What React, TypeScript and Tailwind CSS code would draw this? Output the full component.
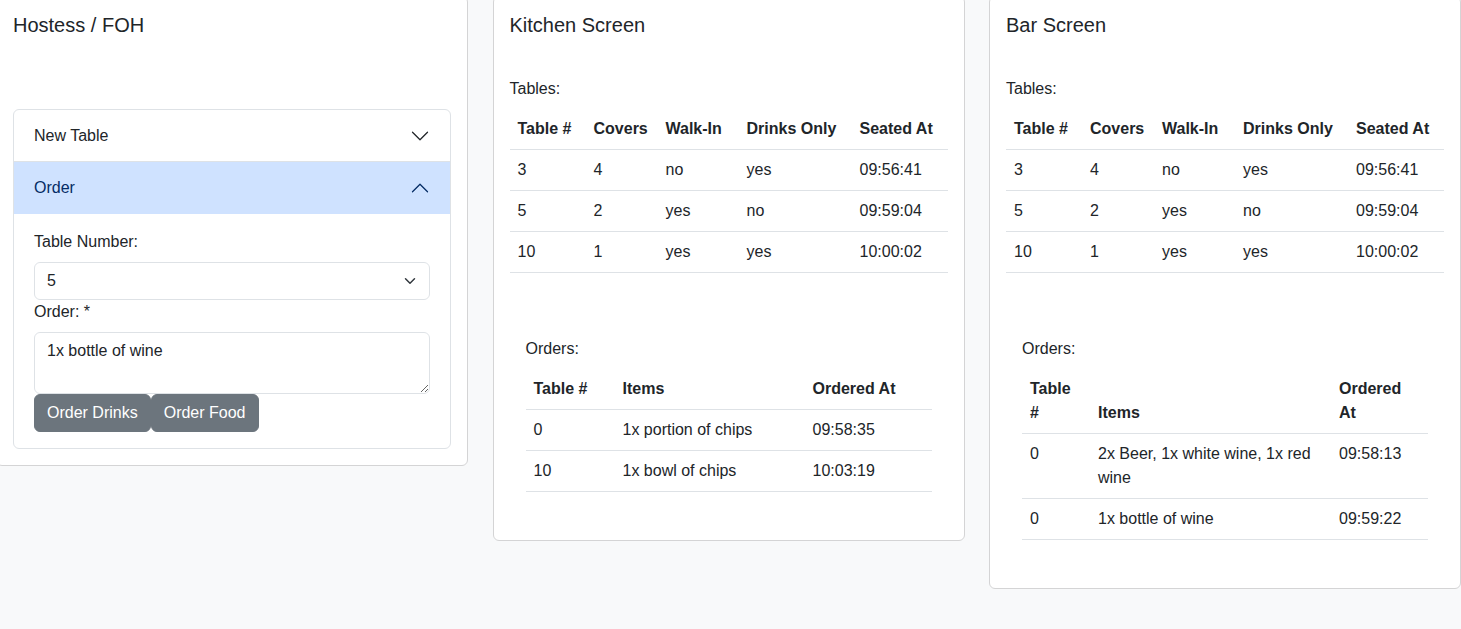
import React from "react";

const FONT = "font-['Liberation_Sans','Arial',sans-serif]";

function Chevron({ up, color }: { up?: boolean; color: string }) {
  return (
    <svg
      viewBox="0 0 16 16"
      className={up ? "w-5 h-5 rotate-180" : "w-5 h-5"}
      fill="none"
      stroke={color}
      strokeLinecap="round"
      strokeLinejoin="round"
    >
      <path d="M2 5L8 11L14 5" />
    </svg>
  );
}

type Col = { label: React.ReactNode; w: string };

function DataTable({
  cols,
  rows,
  className,
}: {
  cols: Col[];
  rows: React.ReactNode[][];
  className?: string;
}) {
  return (
    <table className={"w-full table-fixed border-collapse mb-4 " + (className ?? "")}>
      <colgroup>
        {cols.map((c, i) => (
          <col key={i} className={c.w} />
        ))}
      </colgroup>
      <thead className="align-bottom">
        <tr>
          {cols.map((c, i) => (
            <th
              key={i}
              className="text-left font-bold px-2 py-2 leading-6 border-b border-[#dee2e6] text-[#212529] align-bottom"
            >
              {c.label}
            </th>
          ))}
        </tr>
      </thead>
      <tbody>
        {rows.map((r, ri) => (
          <tr key={ri}>
            {r.map((cell, ci) => (
              <td
                key={ci}
                className="px-2 py-2 leading-6 border-b border-[#dee2e6] align-top"
              >
                {cell}
              </td>
            ))}
          </tr>
        ))}
      </tbody>
    </table>
  );
}

const tableCols: Col[] = [
  { label: "Table #", w: "w-[76px]" },
  { label: "Covers", w: "w-[72px]" },
  { label: "Walk-In", w: "w-[81px]" },
  { label: "Drinks Only", w: "w-[113px]" },
  { label: "Seated At", w: "" },
];

const tableRows = [
  ["3", "4", "no", "yes", "09:56:41"],
  ["5", "2", "yes", "no", "09:59:04"],
  ["10", "1", "yes", "yes", "10:00:02"],
];

function ScreenCard({
  title,
  orderCols,
  orderRows,
}: {
  title: string;
  orderCols: Col[];
  orderRows: React.ReactNode[][];
}) {
  return (
    <div className="w-[472px] shrink-0 bg-white border border-[#d4d4d5] rounded-md p-4">
      <h5 className="text-[20px] leading-6 font-medium mb-2">{title}</h5>
      <div className="mt-10 leading-6 mb-2">Tables:</div>
      <DataTable cols={tableCols} rows={tableRows} />
      <div className="mt-12 p-4">
        <div className="leading-6 mb-2">Orders:</div>
        <DataTable cols={orderCols} rows={orderRows} />
      </div>
    </div>
  );
}

export default function App() {
  return (
    <div className={"min-h-screen bg-[#f8f9fa] text-[#212529] text-base leading-6 overflow-hidden " + FONT}>
      <div className="flex items-start gap-[24.5px] -mt-[4px] -ml-[4px]">
        {/* Hostess card */}
        <div className="w-[472px] shrink-0 bg-white border border-[#d4d4d5] rounded-md p-4">
          <h5 className="text-[20px] leading-6 font-medium mb-2">Hostess / FOH</h5>
          <div className="mt-[72px] border border-[#dee2e6] rounded-md overflow-hidden">
            <div className="h-[52px] flex items-center justify-between px-5 border-b border-[#dee2e6]">
              <span>New Table</span>
              <Chevron color="#212529" />
            </div>
            <div className="h-[52px] flex items-center justify-between px-5 bg-[#cfe2ff] text-[#052c65]">
              <span>Order</span>
              <Chevron up color="#052c65" />
            </div>
            <div className="px-5 py-4">
              <label className="block mb-2">Table Number:</label>
              <div className="relative">
                <select
                  defaultValue="5"
                  className="block w-full h-[38px] appearance-none bg-white border border-[#dee2e6] rounded-md pl-3 pr-9 leading-6 text-[#212529]"
                >
                  <option value="3">3</option>
                  <option value="5">5</option>
                  <option value="10">10</option>
                </select>
                <svg
                  viewBox="0 0 16 16"
                  className="absolute right-3 top-1/2 -translate-y-1/2 w-4 h-3 pointer-events-none"
                  fill="none"
                  stroke="#343a40"
                  strokeWidth={2}
                  strokeLinecap="round"
                  strokeLinejoin="round"
                >
                  <path d="m2 5 6 6 6-6" />
                </svg>
              </div>
              <label className="block mb-2">Order: *</label>
              <textarea
                defaultValue="1x bottle of wine"
                className="block w-full h-[62px] border border-[#dee2e6] rounded-md px-3 py-1.5 leading-6 resize-y text-[#212529]"
              />
              <div className="flex">
                <button className="bg-[#6c757d] border border-[#6c757d] text-white rounded-md px-3 py-1.5 leading-6">
                  Order Drinks
                </button>
                <button className="bg-[#6c757d] border border-[#6c757d] text-white rounded-md px-3 py-1.5 leading-6">
                  Order Food
                </button>
              </div>
            </div>
          </div>
        </div>

        <ScreenCard
          title="Kitchen Screen"
          orderCols={[
            { label: "Table #", w: "w-[89px]" },
            { label: "Items", w: "w-[190px]" },
            { label: "Ordered At", w: "" },
          ]}
          orderRows={[
            ["0", "1x portion of chips", "09:58:35"],
            ["10", "1x bowl of chips", "10:03:19"],
          ]}
        />

        <ScreenCard
          title="Bar Screen"
          orderCols={[
            {
              label: (
                <>
                  Table
                  <br />#
                </>
              ),
              w: "w-[68px]",
            },
            { label: "Items", w: "w-[241px]" },
            {
              label: (
                <>
                  Ordered
                  <br />
                  At
                </>
              ),
              w: "",
            },
          ]}
          orderRows={[
            ["0", "2x Beer, 1x white wine, 1x red wine", "09:58:13"],
            ["0", "1x bottle of wine", "09:59:22"],
          ]}
        />
      </div>
    </div>
  );
}
